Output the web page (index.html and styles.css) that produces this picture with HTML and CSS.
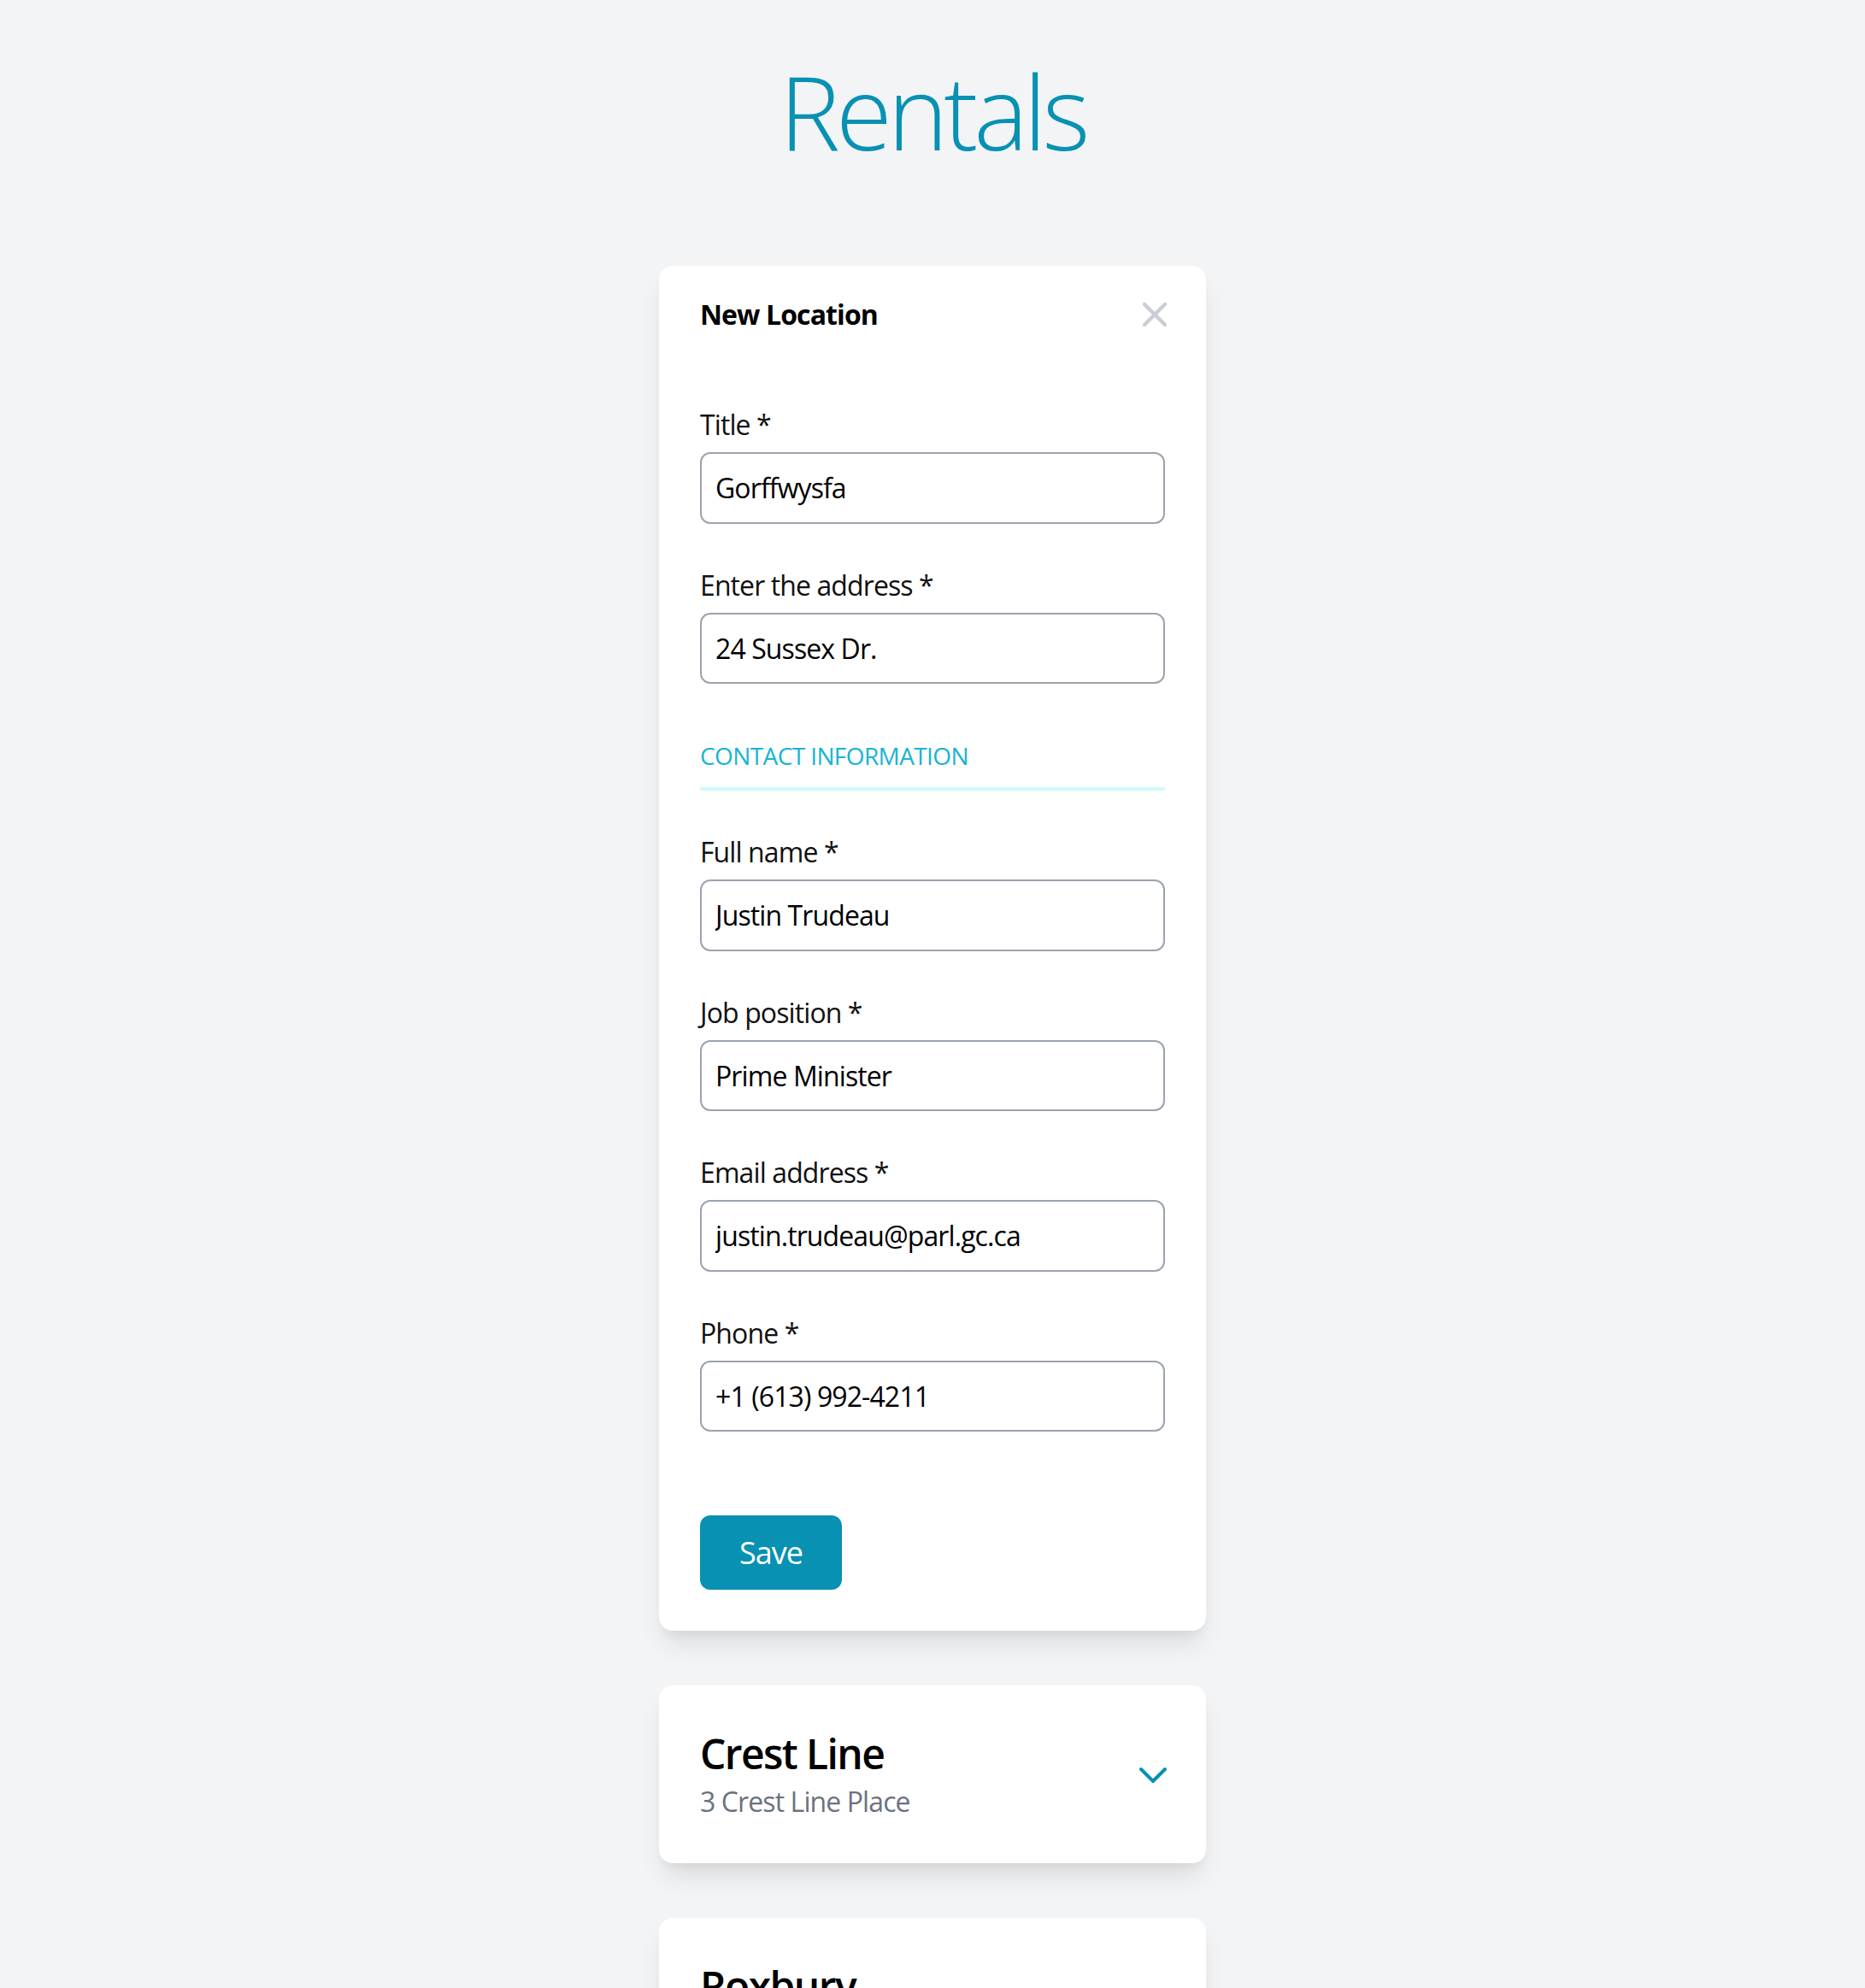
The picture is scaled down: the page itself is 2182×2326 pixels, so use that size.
FILE: index.html
```html
<!DOCTYPE html>
<html lang="en">
<head>
<meta charset="utf-8">
<title>Rentals</title>
<link rel="stylesheet" href="styles.css">
</head>
<body>
<main class="page">
  <h1 class="page-title">Rentals</h1>

  <section class="card form-card">
    <header class="card-header">
      <h2 class="card-heading">New Location</h2>
      <button class="close-btn" type="button" aria-label="Close">
        <svg viewBox="0 0 24 24" width="48" height="48" fill="none" stroke="currentColor" stroke-width="2.2" stroke-linecap="round" stroke-linejoin="round"><path d="M6 18L18 6M6 6l12 12"/></svg>
      </button>
    </header>
    <form class="form">
      <div class="field">
        <label class="label" for="f-title">Title *</label>
        <input class="input" id="f-title" type="text" value="Gorffwysfa">
      </div>
      <div class="field">
        <label class="label" for="f-address">Enter the address *</label>
        <input class="input" id="f-address" type="text" value="24 Sussex Dr.">
      </div>
      <h3 class="section-heading">CONTACT INFORMATION</h3>
      <div class="field">
        <label class="label" for="f-name">Full name *</label>
        <input class="input" id="f-name" type="text" value="Justin Trudeau">
      </div>
      <div class="field">
        <label class="label" for="f-job">Job position *</label>
        <input class="input" id="f-job" type="text" value="Prime Minister">
      </div>
      <div class="field">
        <label class="label" for="f-email">Email address *</label>
        <input class="input" id="f-email" type="text" value="justin.trudeau@parl.gc.ca">
      </div>
      <div class="field">
        <label class="label" for="f-phone">Phone *</label>
        <input class="input" id="f-phone" type="text" value="+1 (613) 992-4211">
      </div>
      <div class="actions">
        <button class="save-btn" type="button">Save</button>
      </div>
    </form>
  </section>

  <section class="card location-card">
    <div class="location-text">
      <h2 class="location-title">Crest Line</h2>
      <p class="location-address">3 Crest Line Place</p>
    </div>
    <svg class="chevron" viewBox="0 0 24 24" width="48" height="48" fill="none" stroke="currentColor" stroke-width="2" stroke-linecap="round" stroke-linejoin="round"><path d="M19 9l-7 7-7-7"/></svg>
  </section>

  <section class="card location-card">
    <div class="location-text">
      <h2 class="location-title">Roxbury</h2>
      <p class="location-address">12 Roxbury Avenue</p>
    </div>
    <svg class="chevron" viewBox="0 0 24 24" width="48" height="48" fill="none" stroke="currentColor" stroke-width="2" stroke-linecap="round" stroke-linejoin="round"><path d="M19 9l-7 7-7-7"/></svg>
  </section>
</main>
</body>
</html>
```

FILE: styles.css
```css
* { box-sizing: border-box; }

html, body {
  margin: 0;
  padding: 0;
}

body {
  background: #f3f4f6;
  font-family: "Open Sans", "Noto Sans", "DejaVu Sans", sans-serif;
  color: #111;
}

.page {
  display: flex;
  flex-direction: column;
  align-items: center;
  padding: 70px 0 200px;
}

.page-title {
  margin: 0 0 121px;
  font-size: 120px;
  line-height: 120px;
  font-weight: 300;
  color: #0891b2;
  letter-spacing: -5.2px;
}

.card {
  width: 640px;
  background: #fff;
  border-radius: 16px;
  box-shadow: 0 20px 30px -6px rgba(0, 0, 0, 0.10), 0 8px 12px -4px rgba(0, 0, 0, 0.05);
}

.form-card {
  padding: 33px 48px 48px;
}

.card-header {
  display: flex;
  align-items: center;
  justify-content: space-between;
  height: 48px;
}

.card-heading {
  margin: 0;
  font-size: 32px;
  line-height: 48px;
  font-weight: 700;
  color: #000;
  letter-spacing: -0.9px;
}

.close-btn {
  width: 48px;
  height: 48px;
  padding: 0;
  margin-right: -12px;
  border: 0;
  background: none;
  color: #c9ced6;
  display: flex;
  align-items: center;
  justify-content: center;
}

.close-btn svg { display: block; }

.form {
  margin-top: 81px;
  display: flex;
  flex-direction: column;
  gap: 48px;
}

.field {
  display: flex;
  flex-direction: column;
  gap: 8px;
}

.label {
  font-size: 32px;
  line-height: 48px;
  color: #111;
  letter-spacing: -0.9px;
}

.input {
  width: 100%;
  height: 83.5px;
  padding: 15px 16px;
  border: 2px solid #9ca3af;
  border-radius: 12px;
  background: #fff;
  font-family: inherit;
  font-size: 32px;
  line-height: 48px;
  color: #000;
  letter-spacing: -0.9px;
  outline: none;
}

.section-heading {
  margin: 16px 0 0;
  padding-bottom: 17px;
  border-bottom: 4px solid #cffafe;
  font-size: 28px;
  line-height: 40px;
  font-weight: 400;
  color: #16b4d3;
  letter-spacing: -0.6px;
}

.actions {
  margin-top: 50px;
  display: flex;
}

.save-btn {
  height: 87px;
  padding: 0 46px;
  border: 0;
  border-radius: 12px;
  background: #0891b2;
  color: #fff;
  font-family: inherit;
  font-size: 36px;
  line-height: 56px;
  letter-spacing: -1px;
}

.location-card {
  margin-top: 64px;
  padding: 48px;
  display: flex;
  align-items: center;
  justify-content: space-between;
}

.location-title {
  margin: 0;
  font-size: 48px;
  line-height: 64px;
  font-weight: 600;
  color: #000;
  letter-spacing: -1.6px;
}

.location-address {
  margin: 0;
  font-size: 32px;
  line-height: 48px;
  color: #6b7280;
  letter-spacing: -0.9px;
}

.chevron {
  display: block;
  color: #0891b2;
  margin-right: -10px;
}
```
